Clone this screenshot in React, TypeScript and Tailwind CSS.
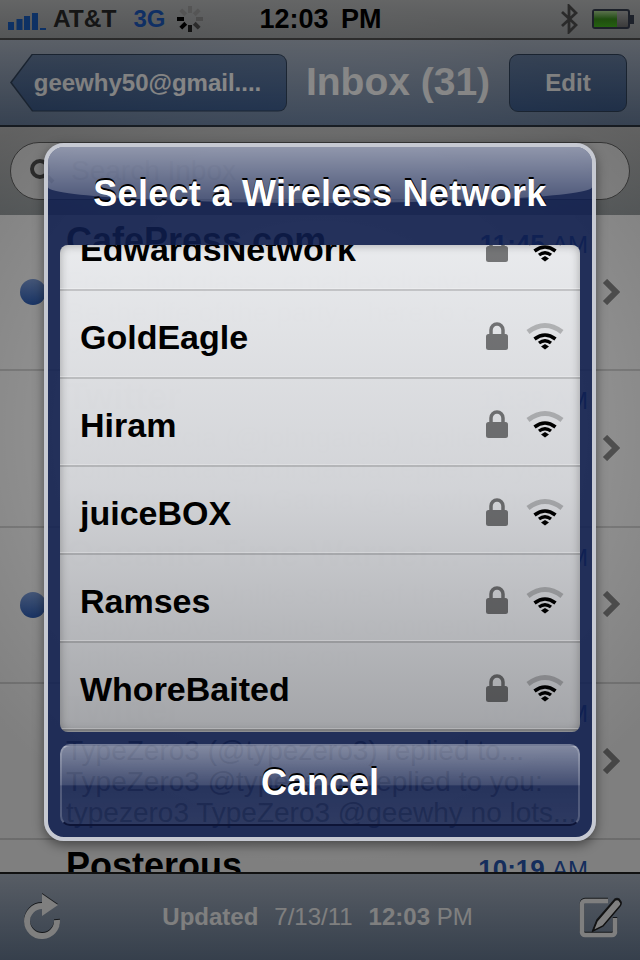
import React from "react";

function Chevron() {
  return (
    <svg width="18" height="26" viewBox="0 0 18 26" className="shrink-0">
      <path d="M3 2 L14 13 L3 24" fill="none" stroke="#8c8c8c" strokeWidth="6" />
    </svg>
  );
}

function Dot() {
  return <div className="absolute left-[20px] top-[64px] w-[26px] h-[26px] rounded-full bg-gradient-to-b from-[#7f9fdc] to-[#2e5fb8]" />;
}

function Mail({ name, time, ampm, l1, l2, l3, unread }: { name: string; time: string; ampm: string; l1: string; l2: string; l3: string; unread?: boolean }) {
  return (
    <div className="relative h-[156.33px] shrink-0 border-b-2 border-[#d9d9d9] bg-white pl-[66px] pr-[20px] pt-[7px] flex">
      {unread && <Dot />}
      <div className="flex-1 min-w-0 whitespace-nowrap overflow-hidden">
        <div className="flex justify-between items-baseline h-[38px] pr-[2px]">
          <span className="text-[36px] leading-[38px] font-bold text-black">{name}</span>
          <span className="text-[#2a5bb8] text-[26px] leading-[38px] font-bold">{time} <span className="font-normal text-[24px]">{ampm}</span></span>
        </div>
        <div className="text-[28px] leading-[31px] text-[#555] mt-[6px]">{l1}</div>
        <div className="text-[28px] leading-[31px] text-[#555]">{l2}</div>
        <div className="text-[28px] leading-[31px] text-[#555]">{l3}</div>
      </div>
      <div className="w-[30px] flex items-center justify-end pb-[8px]"><Chevron /></div>
    </div>
  );
}

function Lock() {
  return (
    <svg width="24" height="30" viewBox="0 0 24 30" className="shrink-0">
      <path d="M6 13 V9 a6 6 0 0 1 12 0 V13" fill="none" stroke="#000" strokeOpacity="0.5" strokeWidth="3.5" />
      <rect x="1" y="13" width="22" height="16" rx="2.5" fill="#000" fillOpacity="0.5" />
    </svg>
  );
}

function Wifi() {
  return (
    <svg width="38" height="28" viewBox="0 0 38 28" className="shrink-0">
      <path d="M2 10 Q19 -3 36 10" fill="none" stroke="#000" strokeOpacity="0.22" strokeWidth="5" />
      <path d="M8.5 17 Q19 9 29.5 17" fill="none" stroke="#000" strokeWidth="3.6" />
      <path d="M13 21 Q19 16.5 25 21" fill="none" stroke="#000" strokeWidth="3.4" />
      <path d="M19 22 L23 24.5 L19 27.5 L15 24.5 Z" fill="#000" />
    </svg>
  );
}

function Net({ name }: { name: string }) {
  return (
    <div className="h-[88px] shrink-0 border-b-2 border-[#00000026] shadow-[inset_0_-1px_0_rgba(255,255,255,0.25)] flex items-center pl-[20px] pr-[16px] pt-[3px]">
      <span className="flex-1 pt-[3px] text-[34px] font-bold text-black">{name}</span>
      <Lock />
      <div className="w-[17px]" />
      <Wifi />
    </div>
  );
}

export default function App() {
  return (
    <div className="relative w-[640px] h-[960px] overflow-hidden flex flex-col bg-white font-['Liberation_Sans',Arial,sans-serif]">
      {/* status bar */}
      <div className="h-[40px] shrink-0 flex items-center bg-gradient-to-b from-[#c9cbcc] to-[#a9acae] border-b-2 border-[#555] pl-[8px] pr-[6px]">
        <svg width="38" height="24" viewBox="0 0 38 24" className="shrink-0 mt-[2px]">
          <rect x="0" y="14" width="6" height="8" fill="#1b62c8" />
          <rect x="8.5" y="11" width="6" height="11" fill="#1b62c8" />
          <rect x="16" y="8" width="6" height="14" fill="#1b62c8" />
          <rect x="24" y="5" width="6" height="17" fill="#1b62c8" />
          <rect x="32" y="20" width="6" height="2" fill="#1b62c8" />
        </svg>
        <span className="ml-[7px] text-[24.5px] text-[#2b2b2b] font-bold">AT&amp;T</span>
        <span className="ml-[17px] text-[24px] text-[#1f5fc8] font-bold">3G</span>
        <svg width="28" height="28" viewBox="0 0 28 28" className="ml-[10px] shrink-0">
          {[0, 45, 90, 135, 180, 225, 270, 315].map((a, i) => (
            <line key={a} x1="14" y1="1" x2="14" y2="8" stroke={["#aaa", "#aaa", "#999", "#555", "#222", "#000", "#000", "#aaa"][i]} strokeWidth="4" transform={`rotate(${a} 14 14)`} />
          ))}
        </svg>
        <span className="ml-[56px] text-[27px] font-bold text-black [word-spacing:5px]">12:03 PM</span>
        <div className="flex-1" />
        <svg width="18" height="30" viewBox="0 0 18 30" className="shrink-0">
          <path d="M2 8 L16 21 L9 28 V2 L16 9 L2 22" fill="none" stroke="#555" strokeWidth="2.8" />
        </svg>
        <div className="ml-[14px] w-[38px] h-[20px] rounded-[3px] border-2 border-[#3a4254] bg-gradient-to-b from-[#bbb] to-[#777] flex shrink-0">
          <div className="w-[23px] bg-gradient-to-b from-[#b6e39a] via-[#3f9a1e] to-[#49c222]" />
        </div>
        <div className="w-[4px] h-[9px] bg-[#3a4254] shrink-0" />
      </div>

      {/* nav bar */}
      <div className="h-[87px] shrink-0 flex items-center bg-gradient-to-b from-[#b6c0cf] to-[#6e84a3] border-b-2 border-[#2d3642] pl-[10px] pr-[13px]">
        <div className="w-[277px] h-[58px] shrink-0 p-[1px] rounded-r-[9px] bg-[#33465f] [clip-path:polygon(0_50%,22px_0,100%_0,100%_100%,22px_100%)]">
          <div className="w-full h-full flex items-center justify-center pr-[2px] rounded-r-[8px] bg-gradient-to-b from-[#6b84a8] to-[#3f5f90] [clip-path:polygon(1px_50%,22px_0,100%_0,100%_100%,22px_100%)]">
            <span className="text-[24px] font-bold text-white">geewhy50@gmail....</span>
          </div>
        </div>
        <span className="flex-1 text-center text-[39px] font-bold text-white whitespace-nowrap">Inbox (31)</span>
        <div className="w-[118px] h-[58px] shrink-0 rounded-[9px] border border-[#33465f] bg-gradient-to-b from-[#6b84a8] to-[#3f5f90] flex items-center justify-center">
          <span className="text-[24px] font-bold text-white">Edit</span>
        </div>
      </div>

      {/* search bar */}
      <div className="h-[88px] shrink-0 bg-gradient-to-b from-[#c4c4c4] to-[#a0a6a8] px-[10px] pt-[15px]">
        <div className="h-[58px] rounded-full bg-[#eeeeee] border border-[#666] flex items-center pl-[18px]">
          <svg width="26" height="26" viewBox="0 0 26 26" className="shrink-0">
            <circle cx="11" cy="11" r="8" fill="none" stroke="#555" strokeWidth="4" />
            <path d="M17 17 L24 24" stroke="#555" strokeWidth="4" />
          </svg>
          <span className="ml-[16px] text-[28px] text-[#aaa]">Search Inbox</span>
        </div>
      </div>

      {/* mail list */}
      <div className="flex-1 min-h-0 overflow-hidden flex flex-col">
        <Mail unread name="CafePress.com" time="11:45" ampm="AM" l1="Free shot glass - email exclusive!" l2="Be the life of the party... here to c" l3="conversion..." />
        <Mail name="Twitter" time="11:38" ampm="AM" l1="John Garcia (@johngarcia) replied to..." l2="John Garcia @johngarcia replied to you:" l3="johngarcia John Garcia @geewhy the..." />
        <Mail unread name="Oceanic Time Warner..." time="11:12" ampm="AM" l1="Hi Geewhy! Unlike some of the comp" l2="Reply above this line to comment on" l3="Unlike some of the com" />
        <Mail name="Twitter" time="10:44" ampm="AM" l1="TypeZero3 (@typezero3) replied to..." l2="TypeZero3 @typezero3 replied to you:" l3="typezero3 TypeZero3 @geewhy no lots..." />
        <Mail name="Posterous" time="10:19" ampm="AM" l1="" l2="" l3="" />
      </div>

      {/* toolbar */}
      <div className="absolute left-0 right-0 bottom-0 h-[88px] border-t-2 border-[#222] bg-gradient-to-b from-[#b0bbcb] to-[#6c7f98] flex items-center pl-[23px] pr-[16px]">
        <svg width="38" height="46" viewBox="0 0 38 46" className="shrink-0 drop-shadow-[0_-1px_0_rgba(0,0,0,0.7)]">
          <path d="M34 26 A15 15 0 1 1 19 12" fill="none" stroke="#fff" strokeWidth="6" />
          <path d="M19 0 L35 11 L19 22 Z" fill="#fff" />
        </svg>
        <div className="flex-1 text-center text-[24px] text-white whitespace-nowrap pr-[4px]">
          <span className="font-bold">Updated</span><span className="ml-[16px]">7/13/11</span><span className="ml-[16px] font-bold">12:03</span> PM
        </div>
        <svg width="46" height="46" viewBox="0 0 46 46" className="shrink-0 drop-shadow-[0_-1px_0_rgba(0,0,0,0.7)]">
          <path d="M30 7 H7 a3 3 0 0 0 -3 3 V38 a3 3 0 0 0 3 3 H34 a3 3 0 0 0 3 -3 V24" fill="none" stroke="#fff" strokeWidth="4.5" />
          <path d="M15 37 L19 27 L37 6 Q39 5 41 6 L43 9 Q43 11 42 12 L25 32 Z" fill="#fff" stroke="#222" strokeWidth="1.5" />
        </svg>
      </div>

      {/* dim layer */}
      <div className="absolute inset-0 bg-[radial-gradient(circle_at_50%_45%,rgba(0,0,0,0.32),rgba(0,0,0,0.5)_70%)]" />

      {/* alert */}
      <div className="absolute left-[44px] top-[143px] w-[552px] h-[698px] rounded-[20px] border-[4px] border-[#c6c9d2] bg-[#0f1f50d9] shadow-[0_4px_12px_rgba(0,0,0,0.45)] p-[12px] pt-0 flex flex-col overflow-hidden">
        <div className="absolute left-0 right-0 top-0 h-[56px] bg-gradient-to-b from-[#ffffff80] to-[#ffffff30] rounded-b-[276px_16px]" />
        <div className="relative h-[98px] shrink-0 flex items-center justify-center pb-[4px]">
          <span className="text-[36px] font-bold text-white tracking-[0.3px] [text-shadow:0_-2px_0_#000] whitespace-nowrap">Select a Wireless Network</span>
        </div>
        <div className="relative h-[487px] shrink-0 rounded-[8px] overflow-hidden bg-gradient-to-b from-[#f1f2f3f5] via-[#d9dadcf5] to-[#a8a9abf5] shadow-[inset_0_0_10px_rgba(0,0,0,0.3)]">
          <div className="-mt-[42px]">
            {["EdwardsNetwork", "GoldEagle", "Hiram", "juiceBOX", "Ramses", "WhoreBaited"].map((n) => (
              <Net key={n} name={n} />
            ))}
          </div>
        </div>
        <div className="relative mt-[12px] h-[82px] shrink-0 rounded-[10px] border-2 border-[#0d1436] border-t-[#ffffff55] border-x-[#ffffff30] overflow-hidden flex items-center justify-center pb-[4px] bg-[linear-gradient(to_bottom,#ffffff70_0%,#ffffff28_50%,#ffffff08_51%,#ffffff10_100%)]">
          <span className="text-[36px] font-bold text-white [text-shadow:0_-2px_0_#000]">Cancel</span>
        </div>
      </div>
    </div>
  );
}
